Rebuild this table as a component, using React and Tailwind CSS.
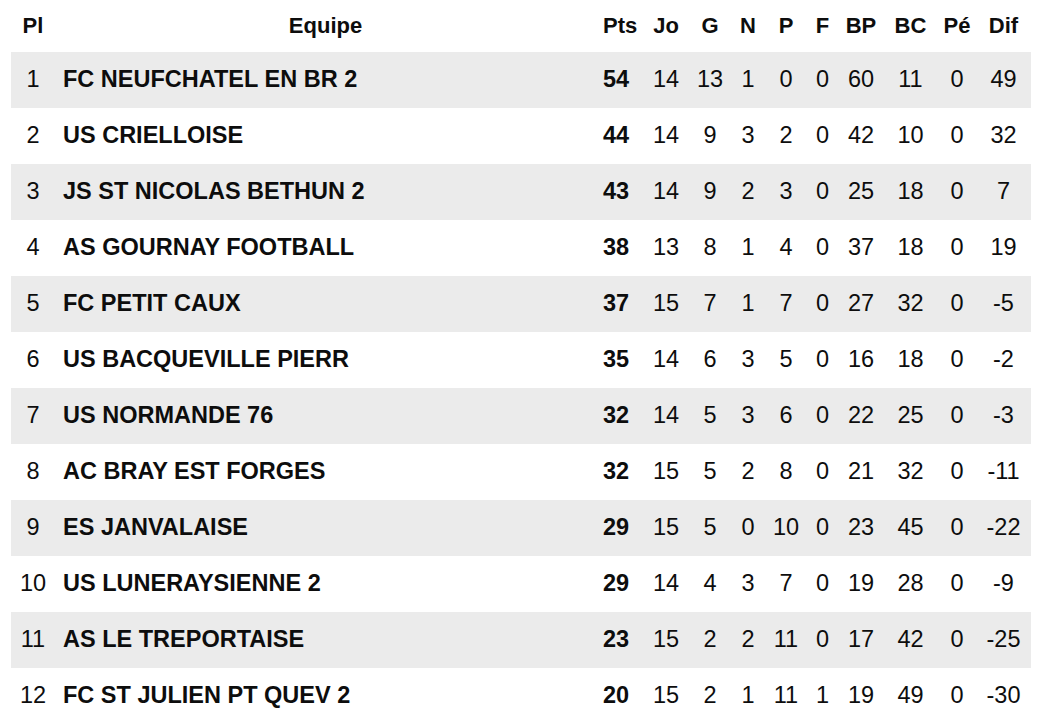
import React from "react";

const rows = [
  [1, "FC NEUFCHATEL EN BR 2", 54, 14, 13, 1, 0, 0, 60, 11, 0, 49],
  [2, "US CRIELLOISE", 44, 14, 9, 3, 2, 0, 42, 10, 0, 32],
  [3, "JS ST NICOLAS BETHUN 2", 43, 14, 9, 2, 3, 0, 25, 18, 0, 7],
  [4, "AS GOURNAY FOOTBALL", 38, 13, 8, 1, 4, 0, 37, 18, 0, 19],
  [5, "FC PETIT CAUX", 37, 15, 7, 1, 7, 0, 27, 32, 0, -5],
  [6, "US BACQUEVILLE PIERR", 35, 14, 6, 3, 5, 0, 16, 18, 0, -2],
  [7, "US NORMANDE 76", 32, 14, 5, 3, 6, 0, 22, 25, 0, -3],
  [8, "AC BRAY EST FORGES", 32, 15, 5, 2, 8, 0, 21, 32, 0, -11],
  [9, "ES JANVALAISE", 29, 15, 5, 0, 10, 0, 23, 45, 0, -22],
  [10, "US LUNERAYSIENNE 2", 29, 14, 4, 3, 7, 0, 19, 28, 0, -9],
  [11, "AS LE TREPORTAISE", 23, 15, 2, 2, 11, 0, 17, 42, 0, -25],
  [12, "FC ST JULIEN PT QUEV 2", 20, 15, 2, 1, 11, 1, 19, 49, 0, -30],
];

const headers = ["Jo", "G", "N", "P", "F", "BP", "BC", "Pé", "Dif"];
const gridCols =
  "grid grid-cols-[44px_541px_46px_48px_40px_36px_40px_33px_44px_55px_38px_55px]";

export default function App() {
  return (
    <div
      className="w-[1044px] h-[728px] bg-white text-[#0d0d0d] overflow-hidden"
      style={{ fontFamily: '"Liberation Sans", Arial, sans-serif' }}
    >
      <div className="ml-[11px] w-[1020px]">
        <div className={`${gridCols} h-[52px] items-center pb-[2px] text-[22px] font-bold`}>
          <div className="text-center">Pl</div>
          <div className="text-center">Equipe</div>
          <div className="pl-[7px]">Pts</div>
          {headers.map((h) => (
            <div key={h} className="text-center">
              {h}
            </div>
          ))}
        </div>
        {rows.map((r, i) => (
          <div
            key={r[0]}
            className={`${gridCols} h-[56px] items-center pb-[1px] text-[23.5px] ${
              i % 2 === 0 ? "bg-[#ebebeb]" : "bg-white"
            }`}
          >
            <div className="text-center">{r[0]}</div>
            <div className="pl-[8px] font-bold">{r[1]}</div>
            <div className="pl-[7px] font-bold">{r[2]}</div>
            {r.slice(3).map((v, j) => (
              <div key={j} className="text-center">
                {v}
              </div>
            ))}
          </div>
        ))}
      </div>
    </div>
  );
}
